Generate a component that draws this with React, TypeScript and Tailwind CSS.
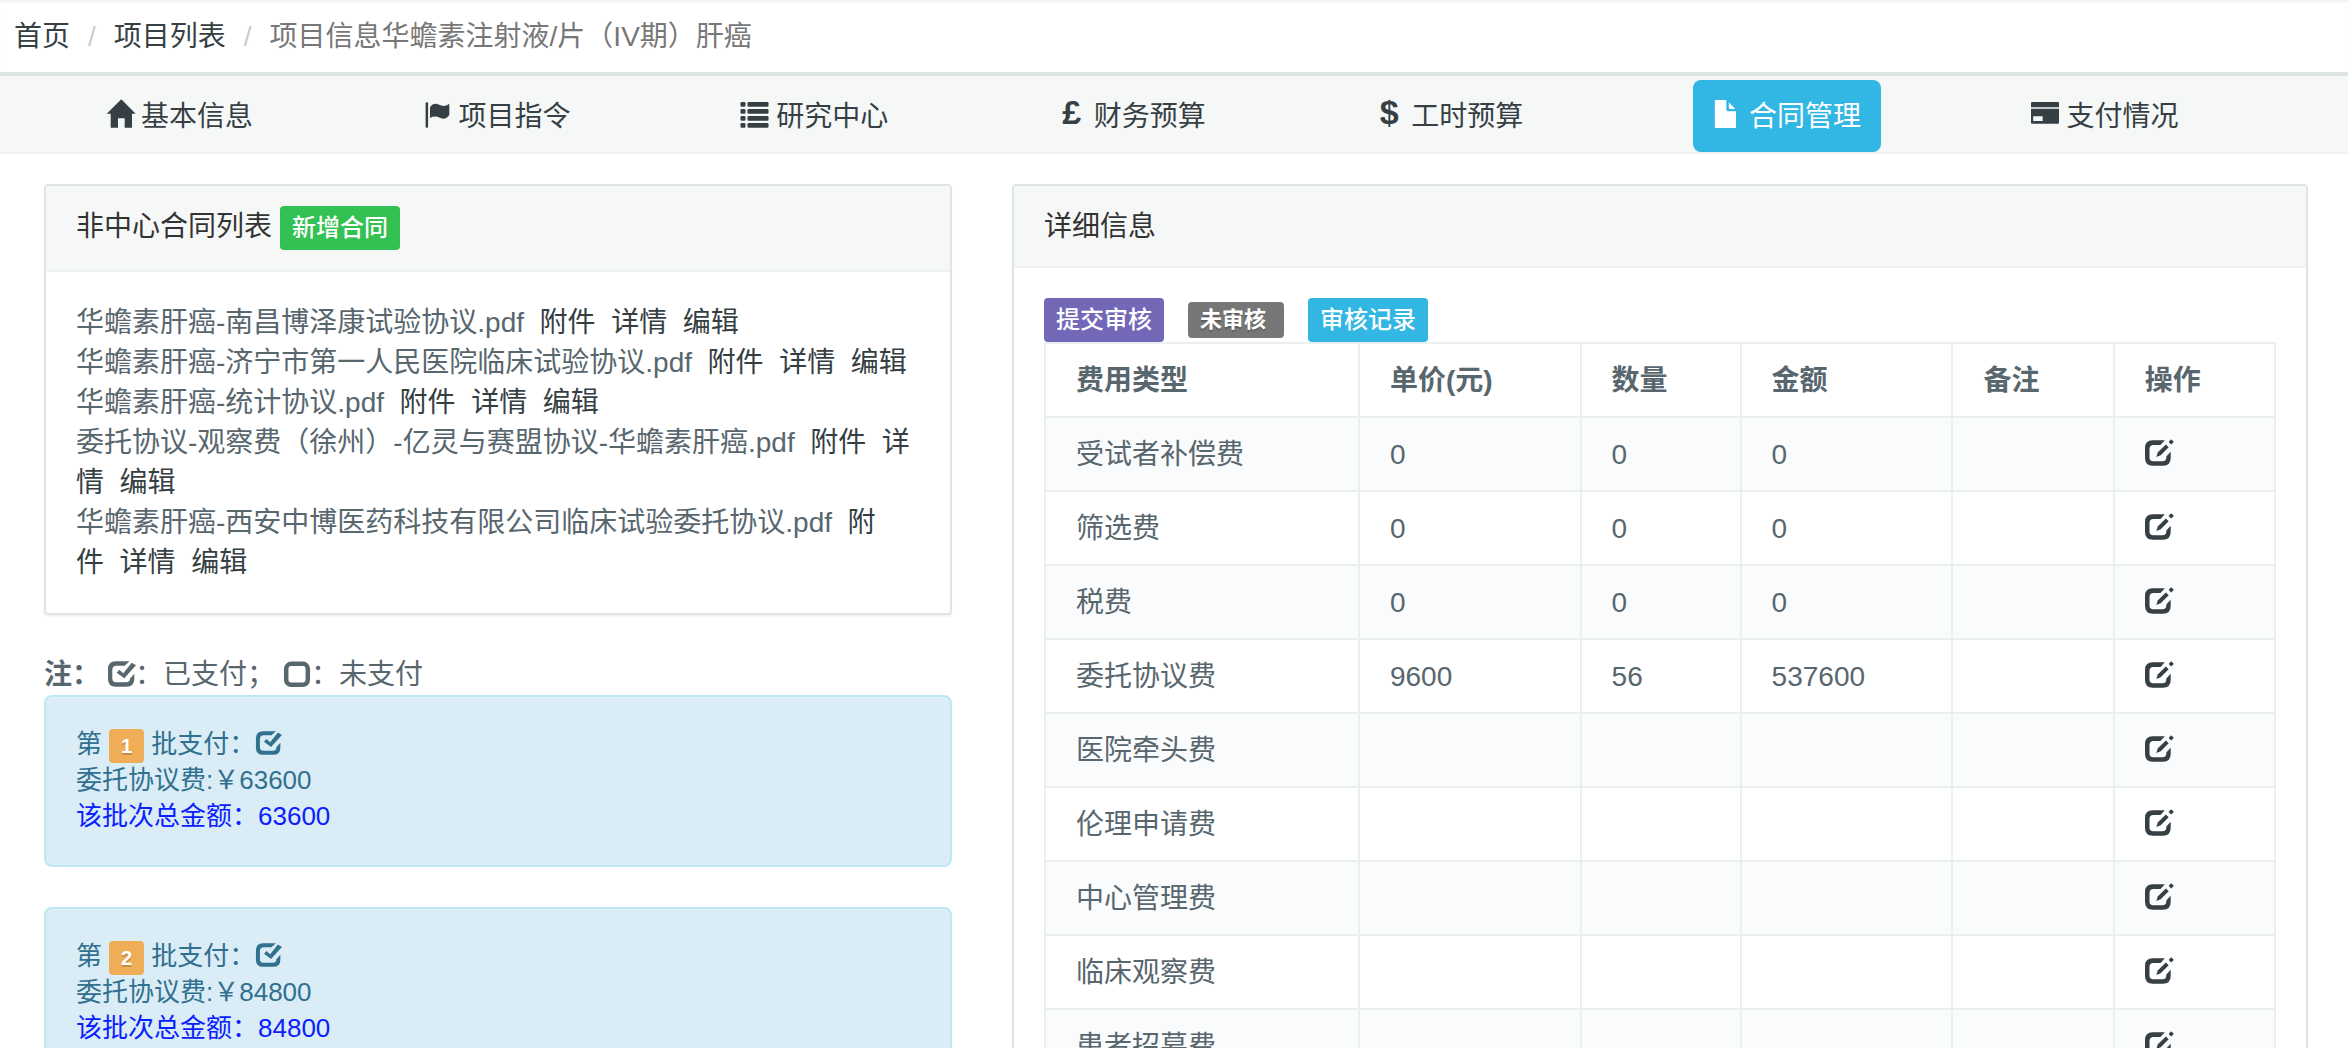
import React from "react";

function Glyph({ className = "size-7", children }: { className?: string; children: React.ReactNode }) {
  return (
    <svg viewBox="0 0 28 28" aria-hidden="true" fill="currentColor" className={`inline-block shrink-0 overflow-visible ${className}`}>
      {children}
    </svg>
  );
}

const HomeIcon = () => (
  <Glyph>
    <path d="M16.3-.7 30.7 13.7H27v14h-7.3v-9.4H13v9.4H5.7v-14h-4z" />
  </Glyph>
);

const FlagIcon = () => (
  <Glyph>
    <rect x="2.6" y="2.2" width="2.5" height="25.6" rx="1" />
    <path d="M7 7q2.500-3.500 6-3.200c3 .2 5 2.400 8 2.100q3-.3 5.300-2.200V15q-2.300 3.700-6 3.800c-3 0-5-2.200-8-2.200q-3 0-5.300 1.400z" />
  </Glyph>
);

const ListIcon = () => (
  <Glyph>
    {[2, 9, 16, 23].map((y) => (
      <g key={y}>
        <rect x="0.500" y={y} width="5" height="4.800" rx="1.200" />
        <rect x="7.500" y={y} width="21" height="4.800" rx="1.200" />
      </g>
    ))}
  </Glyph>
);

const FileIcon = () => (
  <Glyph>
    <path d="M2.500 0h10.800v8.700a2.600 2.600 0 0 0 2.600 2.600H23V27.300a.7.7 0 0 1-.7.7H2.700a.9.900 0 0 1-.9-.9V.7A.7.7 0 0 1 2.500 0z" />
    <path d="M15.800 2.200 22.300 8.900h-5.200a1.300 1.300 0 0 1-1.300-1.300z" />
  </Glyph>
);

const CardIcon = () => (
  <Glyph>
    <path d="M2 2h26a1 1 0 0 1 1 1v4.300H1V3a1 1 0 0 1 1-1z" />
    <path fillRule="evenodd" d="M1 8.800h28v13.900a1 1 0 0 1-1 1H2a1 1 0 0 1-1-1zM3.200 16.300v4.600h9.500v-4.600z" />
  </Glyph>
);

const CheckIcon = ({ className }: { className?: string }) => (
  <Glyph className={className}>
    <path d="M22.500 1.300 17.700 5.700H9.500Q5.300 5.700 5.300 10V18.500Q5.300 22.300 9 22.300H19Q23 22.300 23 18.500L27.300 13.800V19Q27.300 26.700 19.500 26.700H8.700Q1 26.700 1 19V9Q1 1.300 8.700 1.300Z" />
    <path d="M9.700 12.700 12.300 9.700 16.300 13.300 24.700 2.700 29 5.300 17.300 18.300Z" />
  </Glyph>
);

const SquareIcon = () => (
  <Glyph className="mt-1.5 size-7">
    <rect x="3.200" y="2.800" width="21.600" height="21" rx="5" fill="none" stroke="currentColor" strokeWidth="4.500" />
  </Glyph>
);

const EditIcon = () => (
  <Glyph>
    <path d="M20.800 1.300 16.500 5.900H9.500Q5.500 5.900 5.500 10V18.500Q5.500 22.300 9.200 22.300H18.500Q22.300 22.300 22.300 18.500V17.500L26.700 12.800V19Q26.700 26.700 19 26.700H8.700Q1 26.700 1 19V9Q1 1.300 8.700 1.300Z" />
    <path d="M12.300 17.900 13.900 13.300 21.900 5.500 24.700 8.200 16.700 16.200Z" />
    <path d="M24.600 3 26.600.8Q27.200.3 27.800.8L29.300 2.300Q29.800 3 29.300 3.500L27.200 5.600Z" />
  </Glyph>
);

const Currency = ({ sign }: { sign: string }) => (
  <span aria-hidden="true" className="w-7 text-center text-[34px] leading-6 font-bold">
    {sign}
  </span>
);

const tabs = [
  { label: "基本信息", icon: <HomeIcon /> },
  { label: "项目指令", icon: <FlagIcon /> },
  { label: "研究中心", icon: <ListIcon /> },
  { label: "财务预算", icon: <Currency sign="£" /> },
  { label: "工时预算", icon: <Currency sign="$" /> },
  { label: "合同管理", icon: <FileIcon />, active: true },
  { label: "支付情况", icon: <CardIcon /> },
];

const contracts = [
  "华蟾素肝癌-南昌博泽康试验协议.pdf",
  "华蟾素肝癌-济宁市第一人民医院临床试验协议.pdf",
  "华蟾素肝癌-统计协议.pdf",
  "委托协议-观察费（徐州）-亿灵与赛盟协议-华蟾素肝癌.pdf",
  "华蟾素肝癌-西安中博医药科技有限公司临床试验委托协议.pdf",
];

const batches = [
  { no: 1, amount: 63600 },
  { no: 2, amount: 84800 },
];

const fees = [
  ["受试者补偿费", "0", "0", "0"],
  ["筛选费", "0", "0", "0"],
  ["税费", "0", "0", "0"],
  ["委托协议费", "9600", "56", "537600"],
  ["医院牵头费", "", "", ""],
  ["伦理申请费", "", "", ""],
  ["中心管理费", "", "", ""],
  ["临床观察费", "", "", ""],
  ["患者招募费", "", "", ""],
];

const columns = [
  { name: "费用类型", width: "w-[25.5%]" },
  { name: "单价(元)", width: "w-[18%]" },
  { name: "数量", width: "w-[13%]" },
  { name: "金额", width: "w-[17.2%]" },
  { name: "备注", width: "w-[13.1%]" },
  { name: "操作", width: "w-[13.1%]" },
];

function Breadcrumb() {
  return (
    <nav aria-label="breadcrumb" className="border-b-4 border-[#dce4e6] px-3.5 pt-[17px] pb-[15px] shadow-[inset_0_3px_3px_-1px_#f0f0f0]">
      <ol className="flex text-[#363f44]">
        <li><a href="#home">首页</a></li>
        <li aria-hidden="true" className="px-[18px] text-[#ccc]">/</li>
        <li><a href="#projects">项目列表</a></li>
        <li aria-hidden="true" className="px-[18px] text-[#ccc]">/</li>
        <li aria-current="page" className="text-[#777]">项目信息华蟾素注射液/片（IV期）肝癌</li>
      </ol>
    </nav>
  );
}

function TabBar() {
  return (
    <nav className="border-b-2 border-[#edf1f2] bg-[#f6f8f8] pt-1 text-[#363f44]">
      <ul className="flex pl-[105px]">
        {tabs.map((t) => (
          <li key={t.label} className={t.active ? "ml-5 flex-1 text-white" : "flex-1"}>
            <a
              href={`#${t.label}`}
              className={`inline-flex h-[72px] items-start gap-2 rounded-lg pt-5 whitespace-nowrap ${t.active ? "-ml-5 bg-[#32b7e4] px-5" : ""}`}
            >
              {t.icon}
              <span className="leading-[34px]">{t.label}</span>
            </a>
          </li>
        ))}
      </ul>
    </nav>
  );
}

function Panel({ heading, children }: { heading: React.ReactNode; children: React.ReactNode }) {
  return (
    <section className="rounded border-2 border-[#dee5e7] bg-white shadow-[0_2px_2px_rgba(0,0,0,0.05)]">
      <header className="flex items-start gap-2 border-b-2 border-[#edf1f2] bg-[#f6f8f8] px-[30px] py-5 text-[#333]">
        {heading}
      </header>
      <div className="p-[30px]">{children}</div>
    </section>
  );
}

function SmallButton({ color, children }: { color: string; children: React.ReactNode }) {
  return (
    <button type="button" className={`h-11 rounded px-3 text-2xl leading-9 font-medium text-white ${color}`}>
      {children}
    </button>
  );
}

const gap = "\u00a0\u00a0";

function ContractList() {
  return (
    <Panel
      heading={
        <>
          <h2 className="leading-[42px]">非中心合同列表</h2>
          <SmallButton color="bg-[#34c153]">新增合同</SmallButton>
        </>
      }
    >
      <ul className="pt-px">
        {contracts.map((c) => (
          <li key={c}>
            {c}
            {["附件", "详情", "编辑"].map((a) => (
              <React.Fragment key={a}>
                {gap}
                <a href={`#${a}`} className="text-[#363f44]">{a}</a>
              </React.Fragment>
            ))}
          </li>
        ))}
      </ul>
    </Panel>
  );
}

function Batch({ no, amount }: { no: number; amount: number }) {
  return (
    <section className="mb-10 rounded-lg border-2 border-[#bce8f1] bg-[#daecf6] px-[30px] pt-[29px] pb-[31px] text-[26px] leading-9 text-[#31708f] shadow-[inset_0_2px_0_rgba(255,255,255,0.2)]">
      <div className="flex h-9 items-start">
        第
        <span className="mx-[7px] mt-[3px] h-[34px] shrink-0 rounded bg-[#f0ad57] px-3 text-xl leading-[34px] font-bold text-white [text-shadow:0_2px_0_rgba(0,0,0,0.2)]">
          {no}
        </span>
        批支付：
        <CheckIcon className="mt-1 size-[26px]" />
      </div>
      <div>委托协议费:￥{amount}</div>
      <div className="text-[#0a20ff]">该批次总金额：{amount}</div>
    </section>
  );
}

function FeeTable() {
  return (
    <table className="w-full table-fixed border-collapse text-left">
      <thead>
        <tr>
          {columns.map((c) => (
            <th key={c.name} scope="col" className={`border-2 border-[#eaeff0] px-[30px] pt-[17px] pb-[15px] font-bold ${c.width}`}>
              {c.name}
            </th>
          ))}
        </tr>
      </thead>
      <tbody>
        {fees.map(([name, price, count, total]) => (
          <tr key={name} className="odd:bg-[#fafbfc]">
            {[name, price, count, total, ""].map((v, i) => (
              <td key={i} className="border-2 border-[#eaeff0] px-[30px] pt-[17px] pb-[15px]">{v}</td>
            ))}
            <td className="border-2 border-[#eaeff0] px-[29px] pt-[17px] pb-[15px]">
              <button type="button" aria-label={`编辑${name}`} className="flex h-10 items-start pt-1 text-[#363f44]">
                <EditIcon />
              </button>
            </td>
          </tr>
        ))}
      </tbody>
    </table>
  );
}

export default function App() {
  return (
    <div className="min-h-screen bg-white font-['Liberation_Sans','Noto_Sans_CJK_SC',sans-serif] text-[28px] leading-10 text-[#58666e]">
      <Breadcrumb />
      <TabBar />
      <main className="grid grid-cols-[908fr_1296fr] items-start gap-[60px] pt-[30px] pr-10 pl-11">
        <div>
          <ContractList />
          <div className="mt-10 flex h-10 items-start whitespace-nowrap">
            <b>注：</b>
            <CheckIcon className="mt-[5px] ml-[7px] size-7" />
            <span>：已支付；</span>
            <span className="ml-2 flex items-start">
              <SquareIcon />
              ：未支付
            </span>
          </div>
          {batches.map((b) => (
            <Batch key={b.no} {...b} />
          ))}
        </div>
        <Panel heading={<h2 className="h-10 leading-[42px]">详细信息</h2>}>
          <div className="flex items-center gap-6">
            <SmallButton color="bg-[#7367b8]">提交审核</SmallButton>
            <span className="h-9 rounded bg-[#777] pr-[18px] pl-3 text-[22px] leading-9 font-bold text-white [text-shadow:0_2px_0_rgba(0,0,0,0.2)]">
              未审核
            </span>
            <SmallButton color="bg-[#32b7e4]">审核记录</SmallButton>
          </div>
          <FeeTable />
        </Panel>
      </main>
    </div>
  );
}
